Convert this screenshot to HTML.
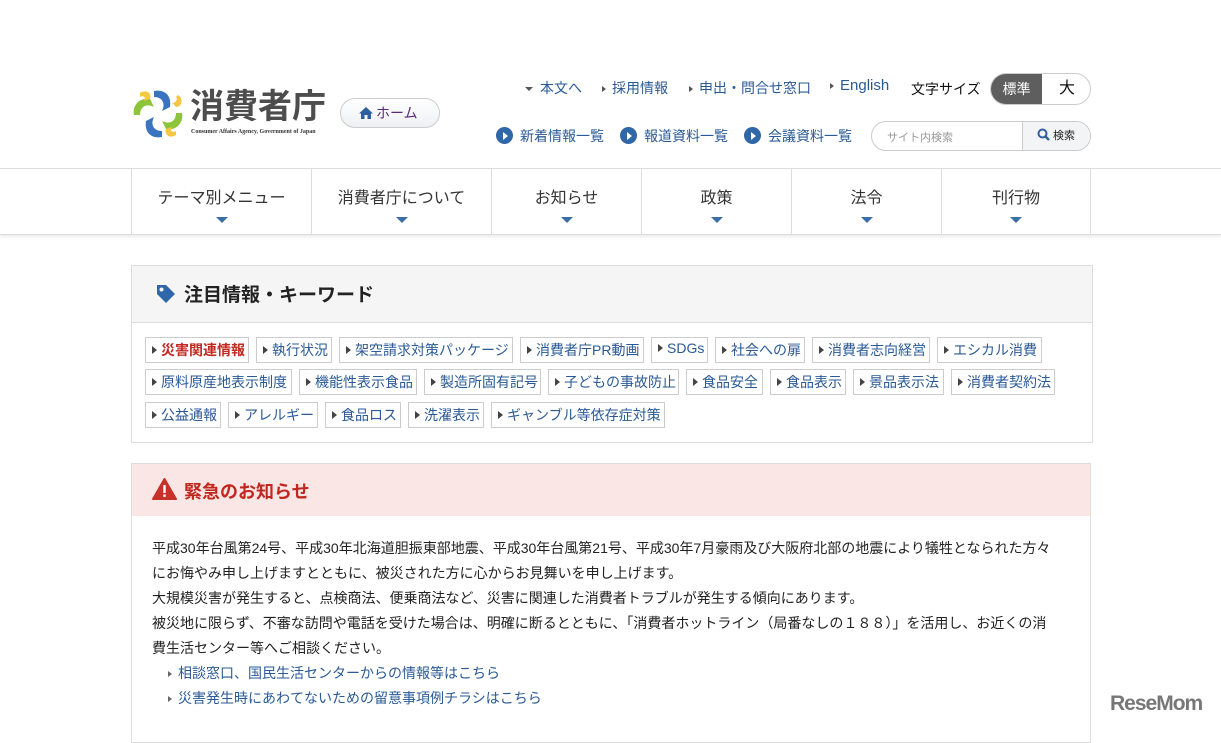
<!DOCTYPE html>
<html><head><meta charset="utf-8"><style>
*{margin:0;padding:0;box-sizing:border-box}
body{width:1221px;height:729px;overflow:hidden;background:#fff;font-family:"Liberation Sans","Noto Sans CJK JP",sans-serif;color:#222;position:relative}
.a{position:absolute;white-space:nowrap}
.lnk{color:#2a5a96;font-size:14px}
.tri{display:inline-block;width:0;height:0;border-top:3px solid transparent;border-bottom:3px solid transparent;border-left:4px solid #555;margin-right:6px;vertical-align:middle}
.dtri{display:inline-block;width:0;height:0;border-left:4px solid transparent;border-right:4px solid transparent;border-top:4px solid #555;margin-right:7px;vertical-align:middle}
.circ{display:inline-block;width:17px;height:17px;border-radius:50%;background:#2f67a8;position:relative;vertical-align:-3px;margin-right:7px}
.circ:after{content:"";position:absolute;left:7px;top:4.5px;border-top:4px solid transparent;border-bottom:4px solid transparent;border-left:5px solid #fff}
.nav{position:absolute;top:168px;left:0;width:1221px;height:67px;border-top:1px solid #ddd;border-bottom:1px solid #ddd;box-shadow:0 2px 3px rgba(0,0,0,.08)}
.ni{position:absolute;top:0;height:65px;border-left:1px solid #ddd;text-align:center;font-size:16px;color:#333;padding-top:15px}
.ni:after{content:"";position:absolute;left:50%;margin-left:-6px;top:48px;border-left:6px solid transparent;border-right:6px solid transparent;border-top:6px solid #3a6ea8}
.tag{position:absolute;height:26px;border:1px solid #ccc;font-size:14px;color:#2a5a96;padding:2px 6px 0 6px;white-space:nowrap}
.tag:before{content:"";display:inline-block;border-top:4px solid transparent;border-bottom:4px solid transparent;border-left:5px solid #444;margin-right:4px;vertical-align:1px}
p.t{font-size:14px;line-height:25px;color:#222}
</style></head><body>

<svg class="a" style="left:130px;top:87px" width="56" height="54" viewBox="0 0 56 54">
<path d="M24 4 C34 2 42 8 40 20 L32 24 C36 16 32 10 24 10Z" fill="#3a74c0"/>
<path d="M52 26 C54 36 46 44 36 42 L32 34 C40 38 46 34 46 26Z" fill="#8cc43a"/>
<path d="M32 50 C22 52 14 46 16 34 L24 30 C20 38 24 44 32 44Z" fill="#3a74c0"/>
<path d="M4 28 C2 18 10 10 20 12 L24 20 C16 16 10 20 10 28Z" fill="#8cc43a"/>
<path d="M10 6 C16 2 22 6 20 12 L14 14 C16 10 14 8 10 10Z" fill="#f4c842"/>
<path d="M46 48 C40 52 34 48 36 42 L42 40 C40 44 42 46 46 44Z" fill="#f4c842"/>
<path d="M48 8 C54 12 52 20 46 20 L42 16 C46 16 48 12 46 10Z" fill="#f4c842"/>
</svg>
<div class="a" style="left:190px;top:87px;font-size:34px;color:#4d4d4d;font-weight:bold;letter-spacing:0px;line-height:40px">消費者庁</div>
<div class="a" style="left:191px;top:129px;font-size:6px;color:#333;font-family:'Liberation Serif',serif;font-weight:bold">Consumer Affairs Agency, Government of Japan</div>

<div class="a" style="left:340px;top:98px;width:100px;height:30px;border:1px solid #ccc;border-radius:15px;background:linear-gradient(#fff,#eef0f4);font-size:14px;color:#5a2a7a;padding-left:18px;line-height:28px">
<svg width="14" height="12" viewBox="0 0 14 12" style="vertical-align:-1px;margin-right:3px"><path d="M7 0 L14 6.5 H12 V12 H8.5 V8 H5.5 V12 H2 V6.5 H0Z" fill="#2f5f9f"/></svg>ホーム</div>

<div class="a lnk" style="left:525px;top:78px"><span class="dtri"></span>本文へ</div>
<div class="a lnk" style="left:602px;top:78px"><span class="tri"></span>採用情報</div>
<div class="a lnk" style="left:689px;top:78px"><span class="tri"></span>申出・問合せ窓口</div>
<div class="a lnk" style="left:830px;top:77px;font-size:15px"><span class="tri"></span>English</div>
<div class="a" style="left:911px;top:79px;font-size:14px;color:#111">文字サイズ</div>
<div class="a" style="left:990px;top:73px;width:101px;height:32px;border:1px solid #ccc;border-radius:16px;overflow:hidden;background:#fff">
<div style="position:absolute;left:0;top:0;width:51px;height:32px;background:#5e5e5e;color:#fff;font-size:14px;text-align:center;line-height:30px">標準</div>
<div style="position:absolute;left:51px;top:0;width:50px;height:32px;font-size:16px;text-align:center;line-height:30px;color:#111">大</div></div>

<div class="a lnk" style="left:496px;top:126px"><span class="circ"></span>新着情報一覧</div>
<div class="a lnk" style="left:620px;top:126px"><span class="circ"></span>報道資料一覧</div>
<div class="a lnk" style="left:744px;top:126px"><span class="circ"></span>会議資料一覧</div>
<div class="a" style="left:871px;top:121px;width:220px;height:30px;border:1px solid #ccc;border-radius:15px;overflow:hidden">
<div style="position:absolute;left:15px;top:7px;font-size:11px;color:#999">サイト内検索</div>
<div style="position:absolute;left:150px;top:0;width:70px;height:30px;border-left:1px solid #ccc;background:#f3f4f6;font-size:11px;color:#222;line-height:28px;padding-left:14px">
<svg width="13" height="13" viewBox="0 0 13 13" style="vertical-align:-2px"><circle cx="5.5" cy="5.5" r="4" fill="none" stroke="#2f5f9f" stroke-width="2"/><path d="M8.5 8.5 L12 12" stroke="#2f5f9f" stroke-width="2.4"/></svg> 検索</div></div>

<div class="nav">
<div class="ni" style="left:131px;width:180px">テーマ別メニュー</div>
<div class="ni" style="left:311px;width:180px">消費者庁について</div>
<div class="ni" style="left:491px;width:150px">お知らせ</div>
<div class="ni" style="left:641px;width:150px">政策</div>
<div class="ni" style="left:791px;width:150px">法令</div>
<div class="ni" style="left:941px;width:150px;border-right:1px solid #ddd">刊行物</div>
</div>

<div class="a" style="left:131px;top:265px;width:962px;height:178px;border:1px solid #ddd">
<div style="height:57px;background:#f5f5f5;border-bottom:1px solid #ddd;position:relative">
<svg style="position:absolute;left:23px;top:17px" width="22" height="22" viewBox="0 0 22 22"><path d="M2 2 H11 L20 11 L11 20 L2 11Z" fill="#2f67a8"/><circle cx="6.5" cy="6.5" r="2" fill="#f5f5f5"/></svg>
<div style="position:absolute;left:52px;top:14px;font-size:19px;font-weight:bold;color:#222">注目情報・キーワード</div></div>
</div>
<div class="tag" style="left:145px;top:337px;width:104px;color:#c0271f;font-weight:bold">災害関連情報</div>
<div class="tag" style="left:256px;top:337px;width:76px">執行状況</div>
<div class="tag" style="left:339px;top:337px;width:174px">架空請求対策パッケージ</div>
<div class="tag" style="left:520px;top:337px;width:124px">消費者庁PR動画</div>
<div class="tag" style="left:651px;top:337px;width:57px">SDGs</div>
<div class="tag" style="left:715px;top:337px;width:90px">社会への扉</div>
<div class="tag" style="left:812px;top:337px;width:118px">消費者志向経営</div>
<div class="tag" style="left:937px;top:337px;width:105px">エシカル消費</div>
<div class="tag" style="left:145px;top:369px;width:147px">原料原産地表示制度</div>
<div class="tag" style="left:299px;top:369px;width:118px">機能性表示食品</div>
<div class="tag" style="left:424px;top:369px;width:117px">製造所固有記号</div>
<div class="tag" style="left:548px;top:369px;width:131px">子どもの事故防止</div>
<div class="tag" style="left:686px;top:369px;width:77px">食品安全</div>
<div class="tag" style="left:770px;top:369px;width:76px">食品表示</div>
<div class="tag" style="left:853px;top:369px;width:91px">景品表示法</div>
<div class="tag" style="left:951px;top:369px;width:104px">消費者契約法</div>
<div class="tag" style="left:145px;top:402px;width:76px">公益通報</div>
<div class="tag" style="left:228px;top:402px;width:90px">アレルギー</div>
<div class="tag" style="left:325px;top:402px;width:76px">食品ロス</div>
<div class="tag" style="left:408px;top:402px;width:76px">洗濯表示</div>
<div class="tag" style="left:491px;top:402px;width:174px">ギャンブル等依存症対策</div>

<div class="a" style="left:131px;top:463px;width:960px;height:280px;border:1px solid #ddd">
<div style="height:52px;background:#fbe6e6;position:relative">
<svg style="position:absolute;left:20px;top:14px" width="25" height="22" viewBox="0 0 25 22"><path d="M12.5 1 L24 21 H1Z" fill="#c8302a" stroke="#c8302a" stroke-linejoin="round" stroke-width="2"/><rect x="11.3" y="7" width="2.4" height="8" fill="#fff"/><rect x="11.3" y="16.5" width="2.4" height="2.4" fill="#fff"/></svg>
<div style="position:absolute;left:52px;top:14px;font-size:18px;font-weight:bold;color:#c0271f">緊急のお知らせ</div></div>
<div style="padding:20px 0 0 20px">
<p class="t">平成30年台風第24号、平成30年北海道胆振東部地震、平成30年台風第21号、平成30年7月豪雨及び大阪府北部の地震により犠牲となられた方々<br>にお悔やみ申し上げますとともに、被災された方に心からお見舞いを申し上げます。<br>大規模災害が発生すると、点検商法、便乗商法など、災害に関連した消費者トラブルが発生する傾向にあります。<br>被災地に限らず、不審な訪問や電話を受けた場合は、明確に断るとともに、「消費者ホットライン（局番なしの１８８）」を活用し、お近くの消<br>費生活センター等へご相談ください。</p>
<p class="t" style="color:#2a5a96;padding-left:16px"><span class="tri" style="border-left-color:#666"></span>相談窓口、国民生活センターからの情報等はこちら<br><span class="tri" style="border-left-color:#666"></span>災害発生時にあわてないための留意事項例チラシはこちら</p>
</div></div>

<div class="a" style="left:1110px;top:692px;font-size:21px;font-weight:bold;color:#777;letter-spacing:-1px">ReseMom</div>
</body></html>
